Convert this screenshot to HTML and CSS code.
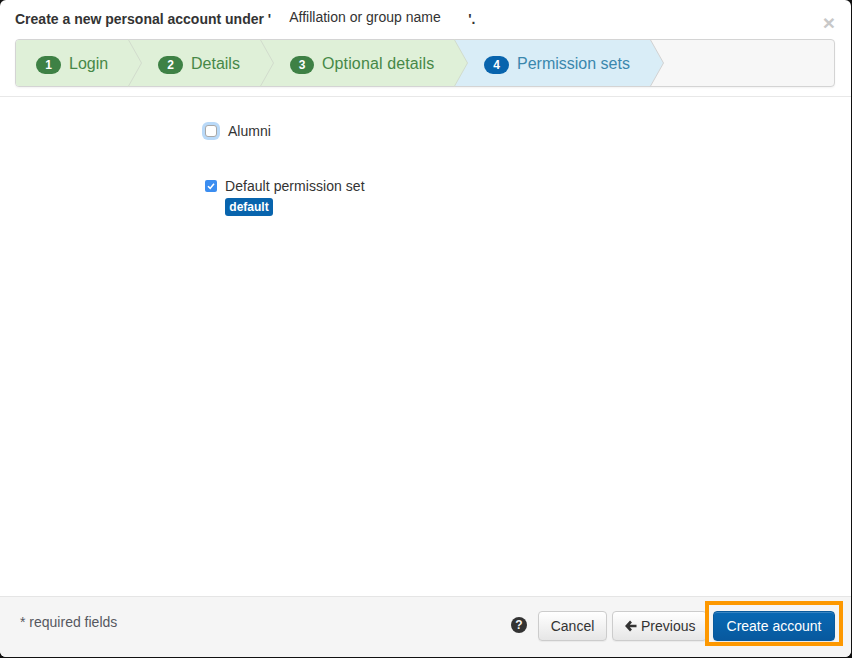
FILE: index.html
```html
<!DOCTYPE html>
<html lang="en">
<head>
<meta charset="utf-8">
<title>Create a new personal account</title>
<link rel="stylesheet" href="styles.css">
</head>
<body>
<div class="modal">
  <header class="modal-header">
    <button class="close" aria-label="Close">×</button>
    <h4 class="title">Create a new personal account under '<span class="group">Affillation or group name</span>'.</h4>
    <ol class="wizard">
      <li class="step done s1"><span class="num">1</span>Login
        <svg class="chev" viewBox="0 0 14 48" preserveAspectRatio="none"><path d="M0 0 L13.5 24 L0 48" /></svg></li>
      <li class="step done s2"><span class="num">2</span>Details
        <svg class="chev" viewBox="0 0 14 48" preserveAspectRatio="none"><path d="M0 0 L13.5 24 L0 48" /></svg></li>
      <li class="step done s3"><span class="num narrow">3</span><span class="wide-label">Optional details</span>
        <svg class="chev" viewBox="0 0 14 48" preserveAspectRatio="none"><path d="M0 0 L13.5 24 L0 48" /></svg></li>
      <li class="step active s4"><span class="num">4</span>Permission sets
        <svg class="chev" viewBox="0 0 14 48" preserveAspectRatio="none"><path d="M0 0 L13.5 24 L0 48" /></svg></li>
    </ol>
  </header>
  <main class="modal-body">
    <label class="perm alumni"><input class="box-empty" type="checkbox"><span>Alumni</span></label>
    <div class="perm default-set">
      <label class="perm-line"><span class="box-checked"><svg viewBox="0 0 12 12"><path d="M3 6.2 L5.2 8.4 L9 3.8"/></svg></span><span>Default permission set</span></label>
      <span class="tag">default</span>
    </div>
  </main>
  <footer class="modal-footer">
    <span class="required">* required fields</span>
    <div class="actions">
      <svg class="help" viewBox="0 0 16 16"><circle cx="8" cy="8" r="8"/><text x="8" y="12.3" text-anchor="middle">?</text></svg>
      <button class="btn cancel">Cancel</button>
      <button class="btn prev"><svg class="arrow" viewBox="0 0 12 12"><path d="M6 1.5 L1.8 6 L6 10.5 M2.4 6 H11.5"/></svg>Previous</button>
      <span class="highlight"><button class="btn primary">Create account</button></span>
    </div>
  </footer>
</div>
</body>
</html>
```
FILE: styles.css
```css
* { box-sizing: border-box; }
html, body { margin: 0; height: 100%; background: #111; }
body { font-family: "Liberation Sans", Arial, sans-serif; font-size: 14px; color: #333; overflow: hidden; }
.modal { width: 851px; height: 657px; background: #fff; border-radius: 6px; display: flex; flex-direction: column; overflow: hidden; }
.modal-header { position: relative; height: 97px; padding: 11px 15px 0; border-bottom: 1px solid #e8e8e8; flex: none; }
.close { position: absolute; right: 16px; top: 12px; border: 0; background: none; padding: 0; font: bold 21px/21px "Liberation Sans", sans-serif; color: #c8c8c8; }
.title { margin: 0; height: 28px; font-size: 14px; line-height: 16px; font-weight: bold; color: #333; white-space: nowrap; }
.group { display: inline-block; width: 197px; padding-left: 18px; font-weight: normal; font-size: 14px; position: relative; top: -2px; }
.wizard { list-style: none; margin: 0; padding: 0; width: 820px; height: 48px; display: flex; background: #f7f7f7; border: 1px solid #d4d4d4; border-radius: 4px; box-shadow: 0 1px 2px rgba(0,0,0,.05); }
.step { position: relative; height: 46px; padding-top: 2px; display: flex; align-items: center; font-size: 16px; flex: none; }
.step.s1 { width: 112px; padding-left: 20px; border-radius: 3px 0 0 3px; }
.step.s2 { width: 132px; padding-left: 30px; }
.step.s3 { width: 194px; padding-left: 30px; }
.step.s4 { width: 196px; padding-left: 30px; }
.wide-label { letter-spacing: .13px; }
.done { background: #dff0d8; color: #468847; }
.active { background: #d9edf7; color: #3a87ad; }
.num { display: inline-block; width: 25px; height: 18px; margin-right: 8px; border-radius: 9px; text-align: center; font-size: 12px; line-height: 18px; font-weight: bold; color: #fff; position: relative; top: 1px; }
.num.narrow { width: 24px; }
.done .num { background: #3e8145; }
.active .num { background: #0864ad; }
.chev { position: absolute; left: 100%; top: -1px; width: 14px; height: 48px; z-index: 1; overflow: visible; }
.done .chev path { fill: #dff0d8; stroke: #d2dccd; stroke-width: 1; }
.active .chev path { fill: #d9edf7; stroke: #d2d2d2; stroke-width: 1; }
.modal-body { flex: 1; position: relative; padding: 27px 0 0 204px; }
.perm { display: block; }
.alumni { display: flex; align-items: center; height: 14px; margin-bottom: 40px; font-size: 14px; }
.box-empty { appearance: none; width: 12px; height: 12px; margin: 0 11px 0 1px; background: #fff; border: 1px solid #a8a8a8; border-radius: 3px; box-shadow: 0 0 0 3px #b9d9f8; }
.perm-line { display: flex; align-items: center; height: 16px; margin-left: 1px; letter-spacing: .05px; }
.box-checked { width: 12px; height: 12px; margin-right: 8px; border-radius: 2px; background: #3b8df0; display: block; }
.box-checked svg { display: block; width: 12px; height: 12px; }
.box-checked path { fill: none; stroke: #fff; stroke-width: 1.6; }
.tag { display: inline-block; margin: 4px 0 0 21px; height: 18px; width: 48px; border-radius: 3px; background: #0864ad; color: #fff; font-size: 12px; font-weight: bold; line-height: 18px; text-align: center; }
.modal-footer { height: 61px; flex: none; background: #f5f5f5; border-top: 1px solid #e5e5e5; display: flex; justify-content: space-between; padding: 14px 8px 0 20px; }
.required { margin-top: 1px; line-height: 20px; color: #55585f; }
.actions { display: flex; align-items: flex-start; }
.help { width: 16px; height: 16px; margin: 6px 11px 0 0; }
.help circle { fill: #333; }
.help text { fill: #f5f5f5; font: bold 12px "Liberation Sans", sans-serif; }
.btn { height: 30px; padding: 0 12px; border: 1px solid #ccc; border-radius: 4px; background: linear-gradient(#fff, #e6e6e6); color: #333; font: 14px "Liberation Sans", sans-serif; box-shadow: inset 0 1px 0 rgba(255,255,255,.2), 0 1px 1px rgba(0,0,0,.05); }
.cancel { width: 69px; padding: 0; }
.prev { display: flex; align-items: center; margin-left: 5px; width: 95px; padding-right: 0; }
.arrow { width: 12px; height: 12px; margin-right: 4px; }
.arrow path { fill: none; stroke: #333; stroke-width: 2.6; }
.highlight { display: block; border: 4px solid #fd9800; margin: -10px 0 0 -2px; padding: 6px 4px; width: 138px; height: 45px; background: #f5f5f5; position: relative; }
.primary { display: block; width: 122px; height: 30px; padding: 0; border-color: #0a5a9c; background: linear-gradient(#0868b4, #08599e); color: #fff; }
```
